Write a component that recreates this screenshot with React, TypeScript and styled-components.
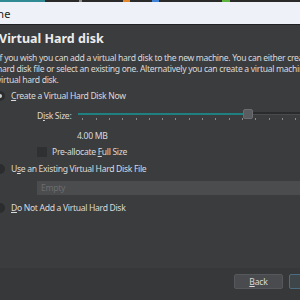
import styled, { createGlobalStyle } from "styled-components";

const GlobalStyle = createGlobalStyle`
  html, body {
    margin: 0;
    padding: 0;
    background: #3b3c3e;
  }
  body {
    font-family: "Noto Sans", "Open Sans", sans-serif;
  }
`;

const Screen = styled.div`
  width: 300px;
  height: 300px;
  overflow: hidden;
  background: #3b3c3e;
`;

const Taskbar = styled.div`
  height: 2px;
  background: #2a2a2b;
  position: relative;
`;

const TaskMark = styled.span<{ $left: number; $width: number; $color: string }>`
  position: absolute;
  top: 0;
  height: 2px;
  left: ${(p) => p.$left}px;
  width: ${(p) => p.$width}px;
  background: ${(p) => p.$color};
`;

const Window = styled.div`
  margin-left: -18px;
  width: 420px;
  display: flex;
  flex-direction: column;
  height: 310px;
`;

const TitleBar = styled.div`
  height: 22px;
  flex: none;
  background: #eef1f8;
  border-bottom: 1px solid #202122;
  display: flex;
  align-items: center;
  font-size: 11px;
  color: #1b1b1b;
  white-space: nowrap;
  overflow: hidden;
`;

const TitleText = styled.span`
  margin-left: -89px;
`;

const Content = styled.div`
  flex: 1;
  padding: 6px 0 0 15px;
  color: #dadada;
  font-size: 8.6px;
  letter-spacing: -0.32px;
`;

const Heading = styled.h1`
  margin: 0 0 6px 2px;
  font-size: 12.5px;
  font-weight: 700;
  color: #ececec;
  line-height: 16px;
  letter-spacing: 0;
`;

const Intro = styled.p`
  margin: 4px 0 0 0;
  line-height: 11px;
  white-space: nowrap;
`;

const Option = styled.label`
  display: flex;
  align-items: center;
  gap: 6px;
  margin-left: -2px;
  height: 14px;
  white-space: nowrap;
`;

const RadioDot = styled.span<{ $checked?: boolean }>`
  width: 10px;
  height: 10px;
  border-radius: 50%;
  background: #2b2c2e;
  display: flex;
  align-items: center;
  justify-content: center;
  &::after {
    content: "";
    width: 4px;
    height: 4px;
    border-radius: 50%;
    background: ${(p) => (p.$checked ? "#d0d0d0" : "transparent")};
  }
`;

const Indented = styled.div`
  padding-left: 40px;
`;

const SizeRow = styled.div`
  display: flex;
  align-items: flex-start;
  gap: 7px;
  height: 20px;
`;

const SizeLabel = styled.span`
  padding-top: 7px;
  white-space: nowrap;
`;

const SliderBox = styled.div`
  flex: 1;
  display: flex;
  flex-direction: column;
  padding-top: 6px;
`;

const Track = styled.div`
  position: relative;
  height: 9px;
  display: flex;
  align-items: center;
`;

const TrackFill = styled.div`
  width: 165px;
  height: 2px;
  background: #1f8080;
`;

const TrackRest = styled.div`
  flex: 1;
  height: 2px;
  background: #2a2b2d;
  border-bottom: 1px solid #4a4b4d;
`;

const Handle = styled.span`
  position: absolute;
  left: 165px;
  top: 0;
  width: 8px;
  height: 8px;
  border-radius: 2px;
  background: #5b5c5f;
  border: 1px solid #6c6d70;
`;

const Ticks = styled.div`
  display: flex;
  gap: 12.3px;
  padding-left: 4px;
  margin-top: 0;
`;

const Tick = styled.span`
  width: 1px;
  height: 2px;
  background: #8a8a8a;
`;

const SizeValue = styled.div`
  padding-left: 40px;
  margin-top: 7px;
  height: 12px;
  line-height: 12px;
`;

const CheckRow = styled.label`
  display: flex;
  align-items: center;
  gap: 5px;
  margin-top: 5px;
  height: 10px;
`;

const CheckBox = styled.span`
  width: 10px;
  height: 10px;
  background: #2f3032;
`;

const Combo = styled.div`
  height: 14px;
  background: #4b4c4e;
  color: #6c6d70;
  display: flex;
  align-items: center;
  padding-left: 4px;
  margin-top: 5px;
`;

const Footer = styled.div`
  height: 44px;
  flex: none;
  background: #37383a;
  display: flex;
  justify-content: flex-end;
  align-items: flex-start;
  gap: 6px;
  padding: 6px 9px 0 0;
  box-sizing: border-box;
`;

const Button = styled.button<{ $primary?: boolean }>`
  width: 49px;
  height: 15px;
  padding: 0;
  border-radius: 2px;
  font-family: inherit;
  font-size: 8.6px;
  letter-spacing: -0.2px;
  color: #d8d8d8;
  background: ${(p) => (p.$primary ? "#3f4649" : "#4a4b4e")};
  border: 1px solid ${(p) => (p.$primary ? "#4c6d80" : "#56575a")};
`;

const Spacer = styled.div<{ $h: number }>`
  height: ${(p) => p.$h}px;
`;

const ticks = Array.from({ length: 24 });

export default function App() {
  return (
    <>
      <GlobalStyle />
      <Screen>
        <Taskbar>
          <TaskMark $left={0} $width={45} $color="#2f8a94" />
          <TaskMark $left={79} $width={3} $color="#8c8c8c" />
          <TaskMark $left={123} $width={7} $color="#e2862c" />
          <TaskMark $left={152} $width={7} $color="#3f83d6" />
          <TaskMark $left={222} $width={8} $color="#5cb43a" />
        </Taskbar>
        <Window>
          <TitleBar>
            <TitleText>Create Virtual Machine</TitleText>
          </TitleBar>
          <Content>
            <Heading>Virtual Hard disk</Heading>
            <Intro>
              If you wish you can add a virtual hard disk to the new machine. You can either create a new
              <br />
              hard disk file or select an existing one. Alternatively you can create a virtual machine without a
              <br />
              virtual hard disk.
            </Intro>
            <Spacer $h={3} />
            <Option>
              <RadioDot $checked />
              <span>
                <u>C</u>reate a Virtual Hard Disk Now
              </span>
            </Option>
            <Indented>
              <SizeRow>
                <SizeLabel>
                  D<u>i</u>sk Size:
                </SizeLabel>
                <SliderBox>
                  <Track>
                    <TrackFill />
                    <TrackRest />
                    <Handle />
                  </Track>
                  <Ticks>
                    {ticks.map((_, i) => (
                      <Tick key={i} />
                    ))}
                  </Ticks>
                </SliderBox>
              </SizeRow>
              <SizeValue>4.00 MB</SizeValue>
              <CheckRow>
                <CheckBox />
                <span>
                  Pre-allocate <u>F</u>ull Size
                </span>
              </CheckRow>
            </Indented>
            <Spacer $h={5} />
            <Option>
              <RadioDot />
              <span>
                U<u>s</u>e an Existing Virtual Hard Disk File
              </span>
            </Option>
            <Indented>
              <Combo>Empty</Combo>
            </Indented>
            <Spacer $h={6} />
            <Option>
              <RadioDot />
              <span>
                <u>D</u>o Not Add a Virtual Hard Disk
              </span>
            </Option>
          </Content>
          <Footer>
            <Button>
              <u>B</u>ack
            </Button>
            <Button $primary>Create</Button>
            <Button>Cancel</Button>
          </Footer>
        </Window>
      </Screen>
    </>
  );
}
